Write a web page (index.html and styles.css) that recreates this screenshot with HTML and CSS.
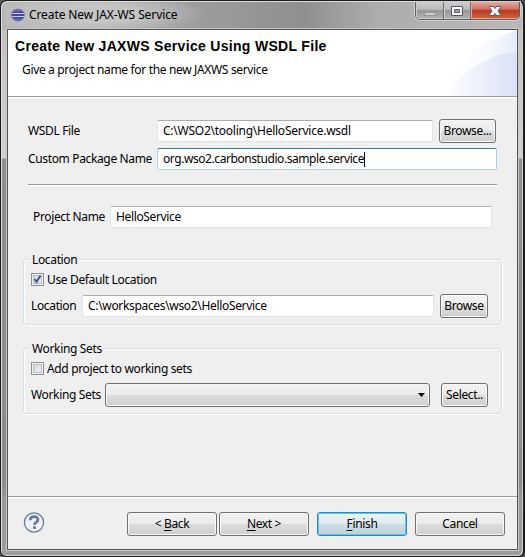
FILE: index.html
```html
<!DOCTYPE html>
<html lang="en">
<head>
<meta charset="utf-8">
<title>Create New JAX-WS Service</title>
<link rel="stylesheet" href="styles.css">
</head>
<body>
<div class="window">
  <div class="titlebar">
    <svg class="app-icon" width="15" height="14" viewBox="0 0 15 14">
      <defs><linearGradient id="orb" x2="0" y2="1"><stop offset="0" stop-color="#8d84c6"/><stop offset=".4" stop-color="#3c3488"/><stop offset=".65" stop-color="#40439a"/><stop offset="1" stop-color="#7280c8"/></linearGradient></defs>
      <circle cx="6.500" cy="7" r="6.300" fill="#c89bc5"/>
      <circle cx="8" cy="7" r="6.500" fill="url(#orb)"/>
      <path d="M2 5.500h12M2 8.500h12" stroke="#bcd0f2"/>
      <path d="M2 7h12" stroke="#4b54a4"/>
    </svg>
    <span class="caption">Create New JAX-WS Service</span>
    <div class="controls">
      <span class="ctl min"><svg width="27" height="18"><rect x="8.500" y="10.500" width="11" height="3" fill="#ccc" stroke="#96969a"/></svg></span>
      <span class="ctl max"><svg width="26" height="18"><path d="M7.500 4.500h11v9h-11z" fill="#fff" stroke="#555762"/><path d="M10.500 7.500h5v3h-5z" fill="#aaa" stroke="#555762"/></svg></span>
      <span class="ctl close"><svg width="48" height="18"><path d="M18.500 4.500h4l1.500 2 1.500-2h4v1l-2.500 3.500 2.500 3.500v1h-4l-1.500-2-1.500 2h-4v-1l2.500-3.500-2.500-3.500z" fill="#f5f5f5" stroke="#5b5362"/></svg></span>
    </div>
  </div>
  <div class="client">
    <header class="banner">
      <svg class="swoosh" width="75" height="66" viewBox="0 0 75 66">
        <defs>
          <linearGradient id="s1"><stop offset="0" stop-color="#fff"/><stop offset=".3" stop-color="#fbfcfe"/><stop offset="1" stop-color="#e6ecf9"/></linearGradient>
          <linearGradient id="s2"><stop offset="0" stop-color="#fff"/><stop offset=".35" stop-color="#f1f4fb"/><stop offset="1" stop-color="#dae2f6"/></linearGradient>
        </defs>
        <path d="M0 66C14 31 40 8 75 1V66z" fill="url(#s1)" opacity=".5"/>
        <path d="M28 41C42 21 53 7 75 1V66H28z" fill="url(#s1)"/>
        <path d="M3 66C19 42 44 24 75 22V66z" fill="url(#s2)"/>
      </svg>
      <h1>Create New JAXWS Service Using WSDL File</h1>
      <p>Give a project name for the new JAXWS service</p>
    </header>
    <main class="form">
      <div class="row wsdl"><span class="label">WSDL File</span><div class="field">C:\WSO2\tooling\HelloService.wsdl</div><div class="button tight"><span>Browse...</span></div></div>
      <div class="row package"><span class="label">Custom Package Name</span><div class="field focused">org.wso2.carbonstudio.sample.service<i class="caret"></i></div></div>
      <div class="rule"></div>
      <div class="row project"><span class="label">Project Name</span><div class="field">HelloService</div></div>
      <section class="group location">
        <span class="legend">Location</span>
        <div class="check"><span class="box"><svg width="9" height="9"><path d="M1.500 4l2 3L7.500.500" fill="none" stroke="#3f5596" stroke-width="2"/></svg></span><span class="check-text">Use Default Location</span></div>
        <div class="row"><span class="label">Location</span><div class="field">C:\workspaces\wso2\HelloService</div><div class="button"><span>Browse</span></div></div>
      </section>
      <section class="group sets">
        <span class="legend">Working Sets</span>
        <div class="check"><span class="box"></span><span class="check-text">Add project to working sets</span></div>
        <div class="row"><span class="label">Working Sets</span><div class="button combo"><svg width="7" height="4"><path d="M0 0h7L3.500 4z"/></svg></div><div class="button"><span>Select..</span></div></div>
      </section>
    </main>
    <footer class="footer">
      <svg class="help" width="22" height="22" viewBox="0 0 22 22"><circle cx="11" cy="10.500" r="9.600" fill="#f1f2f5" stroke="#677b9c" stroke-width="1.300"/><path d="M7.200 8.200C7.200 3.500 15 3.600 15 7.600c0 2.800-3.600 2.800-3.600 5.400" fill="none" stroke="#66799c" stroke-width="2.600"/><rect x="10" y="14.300" width="2.900" height="2.600" fill="#66799c"/></svg>
      <div class="button"><span>&lt; <u>B</u>ack</span></div>
      <div class="button"><span><u>N</u>ext &gt;</span></div>
      <div class="button primary"><span><u>F</u>inish</span></div>
      <div class="button"><span>Cancel</span></div>
    </footer>
  </div>
</div>
</body>
</html>
```
FILE: styles.css
```css
* { box-sizing: border-box; }
body { margin: 0; background: #555; font: 12px/16px "Noto Sans", "Open Sans", sans-serif; letter-spacing: -.35px; color: #000; overflow: hidden; white-space: nowrap; }
svg { display: block; flex: none; }
.window { width: 525px; height: 557px; border: 1px solid #1b1b1b; border-right-width: 2px; border-radius: 7px 7px 6px 6px; padding: 0 5px 6px; display: flex; flex-direction: column; box-shadow: inset 1px 1px 0 #ddd, inset -1px -1px 0 #d0d0d0;
  background: linear-gradient(#b6b6b6 0, #b6b6b6 28px, #c5c1c1 30px, #d3d0d0 157px, #918e8e 158px, #8d8b8b 480px, #999 500px, #9c9f9c 557px); }
.titlebar { height: 27px; flex: none; display: flex; align-items: flex-start; margin: 1px 0 0; background: radial-gradient(ellipse 115px 22px at 85px 12px, #c4c4c4 40%, transparent 100%), linear-gradient(90deg, #b7b7b7, #9e9e9e 35%, #8f8f8f 58%, #acacac 72%, #b9b9b9); }
.app-icon { margin: 6px 0 0 4px; }
.caption { margin: 5px 0 0 4px; letter-spacing: -.1px; }
.controls { display: flex; margin-left: auto; margin-right: -2px; height: 18px; border: 1px solid #5f5f62; border-top: 0; border-radius: 0 0 5px 5px; box-shadow: 0 0 0 1px #d2d2d2; overflow: hidden; }
.ctl { background: linear-gradient(#cecece, #b8b8ba 45%, #98989b 50%, #b4b4b4); border-right: 1px solid #717174; box-shadow: inset 1px -1px 0 #ccc; }
.close { border: 0; background: linear-gradient(#e1aaa0, #cf7060 43%, #b73922 49%, #d06840 100%); box-shadow: inset 1px -1px 0 #e6a68f; }
.client { flex: 1; border: 1px solid #555; box-shadow: 0 0 0 1px #c7c7c7; background: #efefef; display: flex; flex-direction: column; margin-left: 1px; }
.banner { position: relative; height: 67px; flex: none; background: #fff; border-bottom: 1px solid #999; box-shadow: 0 1px #fff; padding: 8px 0 0 7px; }
.swoosh { position: absolute; right: 0; top: 0; }
h1 { position: relative; margin: 0; font: bold 14px/16px "Liberation Sans", Arial, sans-serif; letter-spacing: .31px; }
p { margin: 8px 0 0 7px; letter-spacing: -.34px; }
.form { height: 399px; flex: none; padding: 22px 15px 0; }
.row { display: flex; align-items: center; height: 24px; }
.label { flex: none; padding-bottom: 1px; }
.field { height: 22px; background: #fff; border: 1px solid #e2e3ea; border-top-color: #abadb3; border-radius: 2px; padding: 2px 0 0 5px; display: flex; flex: none; }
.focused { border-color: #a9cee8; border-top-color: #3d7bad; }
.caret { width: 1px; height: 15px; background: #000; margin-top: 1px; }
.button { height: 24px; flex: none; border: 1px solid #707070; border-radius: 3px; background: linear-gradient(#f2f2f2, #ebebeb 50%, #dcdcdc 51%, #cfcfcf); box-shadow: inset 0 0 0 1px #f8f8f8; display: flex; align-items: center; justify-content: center; }
.wsdl, .package { padding-left: 5px; }
.wsdl .label, .package .label { width: 129px; }
.wsdl .field { width: 276px; margin-right: 6px; letter-spacing: -.25px; }
.wsdl .button { width: 57px; }
.package { margin-top: 4px; }
.package .field { width: 340px; letter-spacing: -.43px; }
.rule { margin: 13px 5px 0; height: 2px; background: #999; border-bottom: 1px solid #fff; }
.project { margin: 19px 0 0 10px; }
.project .label { width: 77px; }
.project .field { width: 382px; }
.group { position: relative; width: 479px; height: 66px; border: 1px solid #d5dfe8; border-radius: 3px; box-shadow: inset 1px 1px #fff, 0 1px #fff, 1px 0 #fff; padding: 13px 7px 0; }
.location { margin-top: 30px; }
.sets { margin-top: 23px; }
.legend { position: absolute; left: 7px; top: -8px; background: #efefef; padding: 0 2px 0 1px; }
.check { display: flex; align-items: center; height: 13px; }
.box { width: 13px; height: 13px; border: 1px solid #8e8f8f; box-shadow: inset 0 0 0 1px #f4f4f4, inset 0 0 0 2px #b8bdc4; background: linear-gradient(135deg, #ccd1d8, #f6f6f6); padding: 1px; margin-right: 3px; }
.group .row { margin-top: 8px; }
.location .label { width: 51px; }
.location .field { width: 352px; margin-right: 6px; letter-spacing: -.33px; }
.location .button { width: 48px; }
.sets .label { width: 74px; }
.sets .combo { width: 325px; margin-right: 11px; justify-content: flex-end; padding-right: 4px; }
.sets .button:last-child { width: 47px; }
.footer { flex: 1; display: flex; align-items: flex-start; border-top: 1px solid #999; box-shadow: inset 0 1px #fff; padding: 15px 0 0 15px; }
.help { margin-right: 82px; }
.footer .button { width: 90px; margin-right: 2px; }
.footer .button:nth-of-type(n+2) { margin-right: 8px; }
.footer .primary { border-color: #3c7fb1; background: linear-gradient(#edf3f7, #dfe9ef 50%, #cbdde7 51%, #bed3df); box-shadow: inset 0 0 0 1px #48d1f7; }
u { text-underline-offset: 2px; }
```
